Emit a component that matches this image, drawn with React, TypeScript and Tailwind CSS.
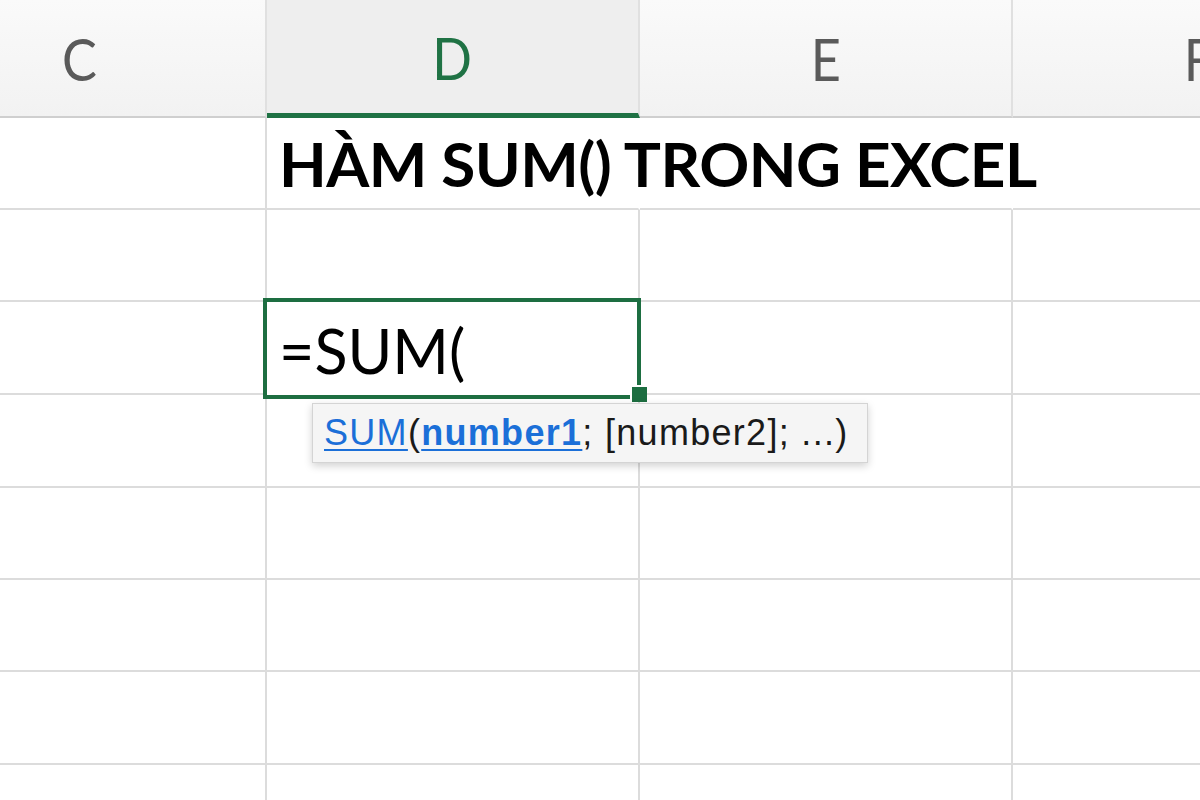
import React from "react";

const rowHeights = [92, 92, 93, 93, 92, 92, 93, 40];

export default function App() {
  const cols = ["C", "D", "E", "F"];
  return (
    <div className="relative w-[1200px] h-[800px] overflow-hidden bg-white" style={{ fontFamily: "Lato, 'Open Sans', sans-serif" }}>
      <div className="flex flex-col ml-[-106px] w-[1500px]">
        {/* header */}
        <div className="flex h-[118px]">
          {cols.map((c) =>
            c === "D" ? (
              <div key={c} className="w-[373px] shrink-0 h-full flex items-center justify-center bg-[#eeeeee] border-r-2 border-[#e0e0e0] border-b-[5px] border-b-[#1f7244] box-border">
                <span className="text-[58px] leading-none text-[#1f7244] pt-[2px] scale-x-90">{c}</span>
              </div>
            ) : (
              <div key={c} className="w-[373px] shrink-0 h-full flex items-center justify-center bg-gradient-to-b from-[#fafafa] to-[#f2f2f2] border-r-2 border-[#e0e0e0] border-b-2 border-b-[#cfcfcf] box-border">
                <span className="text-[58px] leading-none text-[#5a5a5a] pt-[2px] scale-x-90">{c}</span>
              </div>
            )
          )}
        </div>
        {/* rows */}
        {rowHeights.map((h, r) => (
          <div key={r} className="flex" style={{ height: h }}>
            {cols.map((c, ci) => {
              const noRight = r === 0 && (ci === 1 || ci === 2);
              return (
                <div
                  key={c}
                  className={
                    noRight
                      ? "w-[373px] shrink-0 h-full border-r-2 border-r-transparent border-b-2 border-b-[#dcdcdc] box-border relative"
                      : "w-[373px] shrink-0 h-full border-r-2 border-b-2 border-[#dcdcdc] box-border relative"
                  }
                />
              );
            })}
          </div>
        ))}
      </div>

      {/* overflowing title text */}
      <div className="absolute left-[279px] top-[132px] whitespace-nowrap text-[62px] font-bold leading-none text-black tracking-[-0.55px]">
        HÀM SUM() TRONG EXCEL
      </div>

      {/* selected cell */}
      <div className="absolute left-[263px] top-[298px] w-[378px] h-[101px] border-[4px] border-[#1d6e41] bg-white">
        <div className="absolute left-[12px] top-[18px] text-[61px] leading-none text-black whitespace-nowrap">=SUM(</div>
      </div>
      <div className="absolute left-[630px] top-[385px] w-[15px] h-[15px] bg-[#1d6e41] border-l-2 border-t-2 border-white box-content"></div>

      {/* tooltip */}
      <div className="absolute left-[312px] top-[403px] w-[556px] h-[60px] bg-[#f5f5f5] border border-[#d4d4d4] shadow-[0_3px_8px_rgba(0,0,0,0.18)] flex items-center pl-[11px]">
        <span className="text-[36px] leading-none text-[#1a1a1a] whitespace-nowrap tracking-[1.3px]" style={{ fontFamily: "'Liberation Sans', Arial, sans-serif" }}>
          <span className="text-[#1b6fd8] underline decoration-2 underline-offset-4">SUM</span>(
          <span className="text-[#1b6fd8] font-bold underline decoration-2 underline-offset-4">number1</span>; [number2]; ...)
        </span>
      </div>
    </div>
  );
}
